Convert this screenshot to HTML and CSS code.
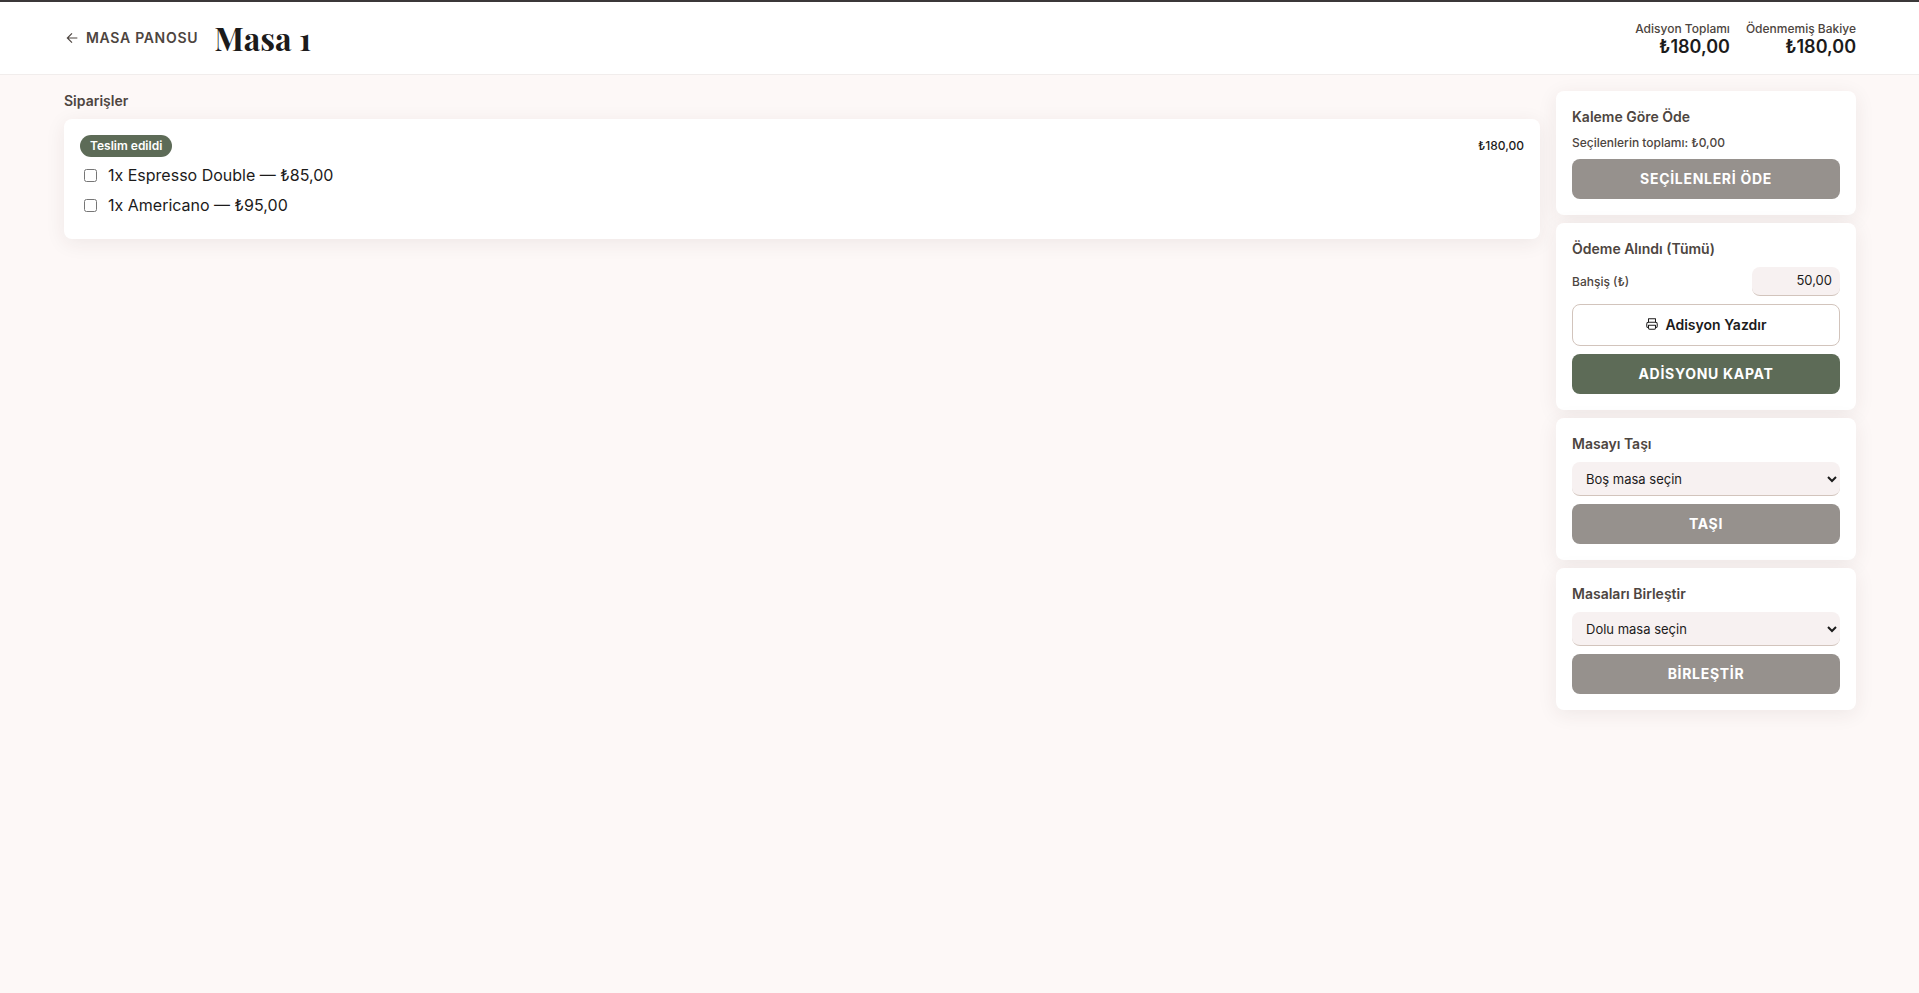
FILE: index.html
```html
<!DOCTYPE html>
<html lang="tr">
<head>
    <meta charset="UTF-8">
    <meta name="viewport" content="width=device-width, initial-scale=1">
    <title>Masa 1</title>
    <link rel="stylesheet" href="styles.css">
</head>
<body>
    <header class="topbar">
        <a href="#" class="back-link">
            <svg width="16" height="16" viewBox="0 0 24 24" fill="none" stroke="currentColor" stroke-width="1.75" aria-hidden="true">
                <path d="M20 12H5M12 5l-7 7 7 7"/>
            </svg>
            MASA PANOSU
        </a>
        <h1>Masa 1</h1>
        <div class="totals">
            <div class="total">
                <span class="total-label">Adisyon Toplamı</span>
                <span class="total-value">₺180,00</span>
            </div>
            <div class="total">
                <span class="total-label">Ödenmemiş Bakiye</span>
                <span class="total-value">₺180,00</span>
            </div>
        </div>
    </header>

    <main class="layout">
        <section class="orders">
            <h2>Siparişler</h2>
            <article class="card order">
                <div class="order-head">
                    <span class="badge">Teslim edildi</span>
                    <span class="order-amount">₺180,00</span>
                </div>
                <ul class="items">
                    <li><label class="item"><input type="checkbox"> 1x Espresso Double — ₺85,00</label></li>
                    <li><label class="item"><input type="checkbox"> 1x Americano — ₺95,00</label></li>
                </ul>
            </article>
        </section>

        <aside class="actions">
            <section class="card panel">
                <h2>Kaleme Göre Öde</h2>
                <p class="small">Seçilenlerin toplamı: ₺0,00</p>
                <button type="button" class="btn" disabled>SEÇİLENLERİ ÖDE</button>
            </section>

            <section class="card panel">
                <h2>Ödeme Alındı (Tümü)</h2>
                <div class="tip-row">
                    <label for="tip" class="small">Bahşiş (₺)</label>
                    <input type="text" id="tip" class="tip-input" inputmode="decimal" value="50,00">
                </div>
                <button type="button" class="btn btn-outline">
                    <svg width="14" height="14" viewBox="0 0 24 24" fill="none" stroke="currentColor" stroke-width="1.75" stroke-linejoin="round" aria-hidden="true">
                        <path d="M6 9V3h12v6"/>
                        <path d="M6 18H5a2 2 0 0 1-2-2v-4a3 3 0 0 1 3-3h12a3 3 0 0 1 3 3v4a2 2 0 0 1-2 2h-1"/>
                        <path d="M6 14h12v5a2 2 0 0 1-2 2H8a2 2 0 0 1-2-2z"/>
                    </svg>
                    Adisyon Yazdır
                </button>
                <button type="button" class="btn btn-primary">ADİSYONU KAPAT</button>
            </section>

            <section class="card panel">
                <h2 id="move-title">Masayı Taşı</h2>
                <select class="select" aria-labelledby="move-title">
                    <option>Boş masa seçin</option>
                </select>
                <button type="button" class="btn" disabled>TAŞI</button>
            </section>

            <section class="card panel">
                <h2 id="merge-title">Masaları Birleştir</h2>
                <select class="select" aria-labelledby="merge-title">
                    <option>Dolu masa seçin</option>
                </select>
                <button type="button" class="btn" disabled>BİRLEŞTİR</button>
            </section>
        </aside>
    </main>
</body>
</html>
```

FILE: styles.css
```css
* {
    box-sizing: border-box;
}

body {
    margin: 0;
    min-height: 100vh;
    background-color: #fdf8f7;
    color: #1c1b1b;
    font-family: Inter, sans-serif;
    font-size: 16px;
    line-height: 24px;
}

h1, h2, p, ul {
    margin: 0;
    padding: 0;
}

h1 {
    font-family: "Playfair Display", "Liberation Serif", serif;
    font-size: 32px;
    line-height: 40px;
    font-weight: 700;
}

h2 {
    color: #4d4540;
    font-size: 14px;
    line-height: 20px;
    font-weight: 600;
}

.topbar {
    display: flex;
    align-items: center;
    gap: 16px;
    padding: 16px 63px 16px 64px;
    background-color: #fff;
    border-top: 2px solid #3b3839;
    border-bottom: 1px solid #f1edec;
}

.back-link {
    display: flex;
    align-items: center;
    gap: 6px;
    color: #4d4540;
    font-size: 14px;
    line-height: 20px;
    font-weight: 600;
    letter-spacing: 0.05em;
    text-decoration: none;
}

.totals {
    display: flex;
    gap: 16px;
    margin-left: auto;
    padding-top: 2px;
}

.total {
    display: flex;
    flex-direction: column;
    align-items: flex-end;
}

.total-label,
.small {
    color: #4d4540;
    font-size: 12px;
    line-height: 16px;
    font-weight: 500;
}

.total-value {
    font-size: 18px;
    line-height: 20px;
    font-weight: 600;
}

.layout {
    display: grid;
    grid-template-columns: 1fr 300px;
    gap: 16px;
    align-items: start;
    padding: 16px 63px 16px 64px;
}

.orders,
.actions {
    display: flex;
    flex-direction: column;
    gap: 8px;
}

.card {
    padding: 16px;
    background-color: #fff;
    border-radius: 8px;
    box-shadow: 0 4px 20px rgba(62, 39, 35, 0.08);
}

.order-head {
    display: flex;
    justify-content: space-between;
    align-items: center;
    margin-bottom: 3px;
}

.badge {
    padding: 3px 10px;
    border-radius: 12px;
    background-color: #5d6b57;
    color: #fff;
    font-size: 12px;
    line-height: 16px;
    font-weight: 600;
}

.order-amount {
    font-size: 12px;
    line-height: 16px;
    font-weight: 500;
}

.items {
    padding-bottom: 3px;
    list-style: none;
}

.item {
    display: flex;
    align-items: center;
    gap: 8px;
    height: 30px;
}

.panel {
    display: flex;
    flex-direction: column;
    gap: 8px;
}

.btn {
    display: flex;
    justify-content: center;
    align-items: center;
    gap: 6px;
    height: 40px;
    padding: 0 8px 2px;
    border: 0;
    border-radius: 8px;
    background-color: #96918d;
    color: #fff;
    font-family: inherit;
    font-size: 14px;
    font-weight: 700;
    letter-spacing: 0.05em;
}

.btn-primary {
    background-color: #5d6b57;
}

.btn-outline {
    height: 42px;
    border: 1px solid #d2c4bc;
    background-color: #fff;
    color: #1c1b1b;
    font-weight: 600;
    letter-spacing: normal;
}

.tip-row {
    display: flex;
    justify-content: space-between;
    align-items: center;
}

.tip-input,
.select {
    border: 0;
    border-bottom: 1px solid #d2c4bc;
    border-radius: 8px;
    background-color: #f7f1f1;
    color: #1c1b1b;
    font-family: inherit;
    font-size: 13px;
}

.tip-input {
    width: 88px;
    height: 29px;
    padding: 3px 8px 5px;
    text-align: right;
}

.select {
    height: 34px;
    padding: 0 10px;
}
```
